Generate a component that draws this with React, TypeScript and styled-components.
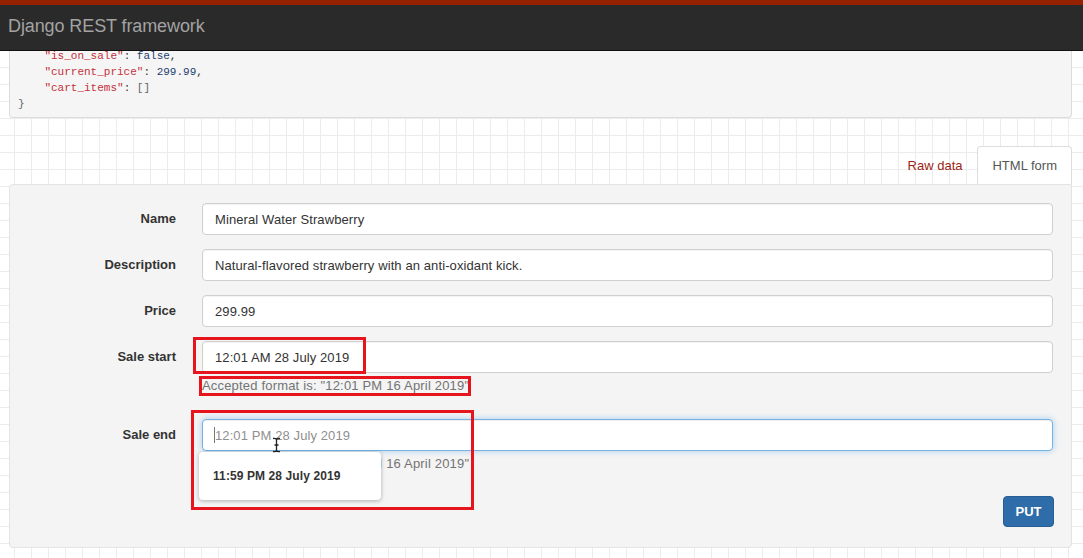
import React from "react";
import styled, { createGlobalStyle } from "styled-components";

const GlobalStyle = createGlobalStyle`
  html, body {
    margin: 0;
    padding: 0;
  }
  body {
    font-family: "Liberation Sans", Arial, Helvetica, sans-serif;
    font-size: 13px;
    color: #333;
    background-color: #fff;
    background-image: linear-gradient(#ececec 1px, transparent 1px),
      linear-gradient(90deg, #ececec 1px, transparent 1px);
    background-size: 17px 17px;
    background-position: 14px 16px;
  }
`;

const Page = styled.div`
  position: relative;
  width: 1083px;
  height: 558px;
  overflow: hidden;
`;

const Navbar = styled.div`
  height: 45px;
  border-top: 5px solid #962100;
  border-bottom: 1px solid #111;
  background: #2a2a2a;
  display: flex;
  align-items: center;
  padding-left: 8px;
`;

const Brand = styled.span`
  font-size: 18px;
  color: #a3a3a3;
  letter-spacing: -0.1px;
  margin-top: -2px;
`;

const Content = styled.div`
  padding: 0 11px 0 9px;
`;

const ResponsePanel = styled.pre`
  margin: 0;
  height: 66px;
  overflow: hidden;
  background: #f5f5f5;
  border: 1px solid #dcdcdc;
  border-top: none;
  border-radius: 0 0 4px 4px;
  font-family: "Liberation Mono", "Courier New", monospace;
  font-size: 11px;
  line-height: 16px;
  color: #333;
  padding: 0 0 0 8px;
`;

const Lines = styled.div`
  margin-top: -3px;
`;

const Str = styled.span`
  color: #c4313b;
`;

const Lit = styled.span`
  color: #23406f;
`;

const Punct = styled.span`
  color: #666;
`;

const Tabs = styled.div`
  display: flex;
  justify-content: flex-end;
  margin-top: 28px;
`;

const Tab = styled.div<{ $active?: boolean }>`
  padding: 0 14px;
  height: 37px;
  display: flex;
  align-items: center;
  font-size: 13px;
  color: ${(p) => (p.$active ? "#555" : "#9c2515")};
  background: ${(p) => (p.$active ? "#fff" : "transparent")};
  border: 1px solid ${(p) => (p.$active ? "#ddd" : "transparent")};
  border-bottom: none;
  border-radius: 4px 4px 0 0;
`;

const Well = styled.div`
  background: #f4f4f4;
  border: 1px solid #e3e3e3;
  border-radius: 4px 0 4px 4px;
  padding: 18px 18px 18px 0;
  height: 326px;
`;

const Row = styled.div`
  display: grid;
  grid-template-columns: 166px 1fr;
  column-gap: 26px;
  align-items: start;
  margin-bottom: 14px;
`;

const Label = styled.label`
  font-weight: bold;
  font-size: 13px;
  color: #333;
  text-align: right;
  line-height: 32px;
`;

const Field = styled.div`
  position: relative;
`;

const Input = styled.input<{ $focused?: boolean }>`
  box-sizing: border-box;
  width: 100%;
  height: 32px;
  padding: 0 12px;
  font-family: "Liberation Sans", Arial, Helvetica, sans-serif;
  font-size: 13px;
  letter-spacing: 0.1px;
  color: #333;
  background: #fff;
  border: 1px solid ${(p) => (p.$focused ? "#78b3e2" : "#cfcfcf")};
  border-radius: 4px;
  box-shadow: ${(p) =>
    p.$focused
      ? "inset 0 1px 1px rgba(0,0,0,.075), 0 0 6px rgba(102,175,233,.55)"
      : "inset 0 1px 1px rgba(0,0,0,.05)"};
  outline: none;

  &::placeholder {
    color: #8f8f8f;
  }
`;

const Caret = styled.span`
  position: absolute;
  left: 12px;
  top: 8px;
  width: 1px;
  height: 16px;
  background: #777;
`;

const Help = styled.div`
  margin: 4px 0 0;
  line-height: 18px;
  font-size: 13px;
  letter-spacing: 0.18px;
  color: #737373;
`;

const Gap = styled.div<{ $h: number }>`
  height: ${(p) => p.$h}px;
`;

const Actions = styled.div`
  display: flex;
  justify-content: flex-end;
  margin-top: 23px;
`;

const PutButton = styled.button`
  width: 51px;
  height: 31px;
  background: #2e6caa;
  border: 1px solid #285e96;
  border-radius: 4px;
  color: #fff;
  font-family: "Liberation Sans", Arial, Helvetica, sans-serif;
  font-size: 13px;
  font-weight: bold;
  padding: 0;
  margin-right: -1px;
`;

const Suggestions = styled.div`
  position: absolute;
  left: -3px;
  top: 33px;
  width: 182px;
  height: 48px;
  background: #fff;
  border-radius: 4px;
  box-shadow: 0 1px 4px rgba(0, 0, 0, 0.3);
  display: flex;
  align-items: center;
  padding-left: 14px;
  box-sizing: border-box;
  font-size: 12px;
  font-weight: bold;
  letter-spacing: 0.1px;
  color: #333;
  z-index: 2;
`;

const Annotation = styled.div<{ $x: number; $y: number; $w: number; $h: number }>`
  position: absolute;
  left: ${(p) => p.$x}px;
  top: ${(p) => p.$y}px;
  width: ${(p) => p.$w}px;
  height: ${(p) => p.$h}px;
  box-sizing: border-box;
  border: 3px solid #e5141d;
  pointer-events: none;
  z-index: 3;
`;

const Pointer = styled.svg`
  position: absolute;
  left: 272px;
  top: 437px;
  z-index: 4;
`;

export default function App() {
  return (
    <Page>
      <GlobalStyle />
      <Navbar>
        <Brand>Django REST framework</Brand>
      </Navbar>
      <Content>
        <ResponsePanel>
          <Lines>
            {"    "}
            <Str>"is_on_sale"</Str>: <Lit>false</Lit>,{"\n"}
            {"    "}
            <Str>"current_price"</Str>: <Lit>299.99</Lit>,{"\n"}
            {"    "}
            <Str>"cart_items"</Str>: <Punct>[]</Punct>
            {"\n"}
            <Punct>{"}"}</Punct>
          </Lines>
        </ResponsePanel>

        <Tabs>
          <Tab>Raw data</Tab>
          <Tab $active>HTML form</Tab>
        </Tabs>

        <Well>
          <Row>
            <Label>Name</Label>
            <Field>
              <Input readOnly value="Mineral Water Strawberry" />
            </Field>
          </Row>
          <Row>
            <Label>Description</Label>
            <Field>
              <Input
                readOnly
                value="Natural-flavored strawberry with an anti-oxidant kick."
              />
            </Field>
          </Row>
          <Row>
            <Label>Price</Label>
            <Field>
              <Input readOnly value="299.99" />
            </Field>
          </Row>
          <Row>
            <Label>Sale start</Label>
            <Field>
              <Input readOnly value="12:01 AM 28 July 2019" />
              <Help>Accepted format is: "12:01 PM 16 April 2019"</Help>
              <Gap $h={10} />
            </Field>
          </Row>
          <Row>
            <Label>Sale end</Label>
            <Field>
              <Input $focused readOnly placeholder="12:01 PM 28 July 2019" />
              <Caret />
              <Help>Accepted format is: "12:01 PM 16 April 2019"</Help>
              <Suggestions>11:59 PM 28 July 2019</Suggestions>
            </Field>
          </Row>
          <Actions>
            <PutButton>PUT</PutButton>
          </Actions>
        </Well>
      </Content>

      <Annotation $x={193} $y={337} $w={173} $h={37} />
      <Annotation $x={199} $y={376} $w={272} $h={20} />
      <Annotation $x={191} $y={410} $w={283} $h={100} />

      <Pointer width="9" height="16" viewBox="0 0 9 16">
        <path
          d="M1 1.5 Q4.5 1 4.5 3 L4.5 13 Q4.5 15 1 14.5 M8 1.5 Q4.5 1 4.5 3 M4.5 13 Q4.5 15 8 14.5 M2.5 8 L6.5 8"
          fill="none"
          stroke="#222"
          strokeWidth="1.3"
        />
      </Pointer>
    </Page>
  );
}
